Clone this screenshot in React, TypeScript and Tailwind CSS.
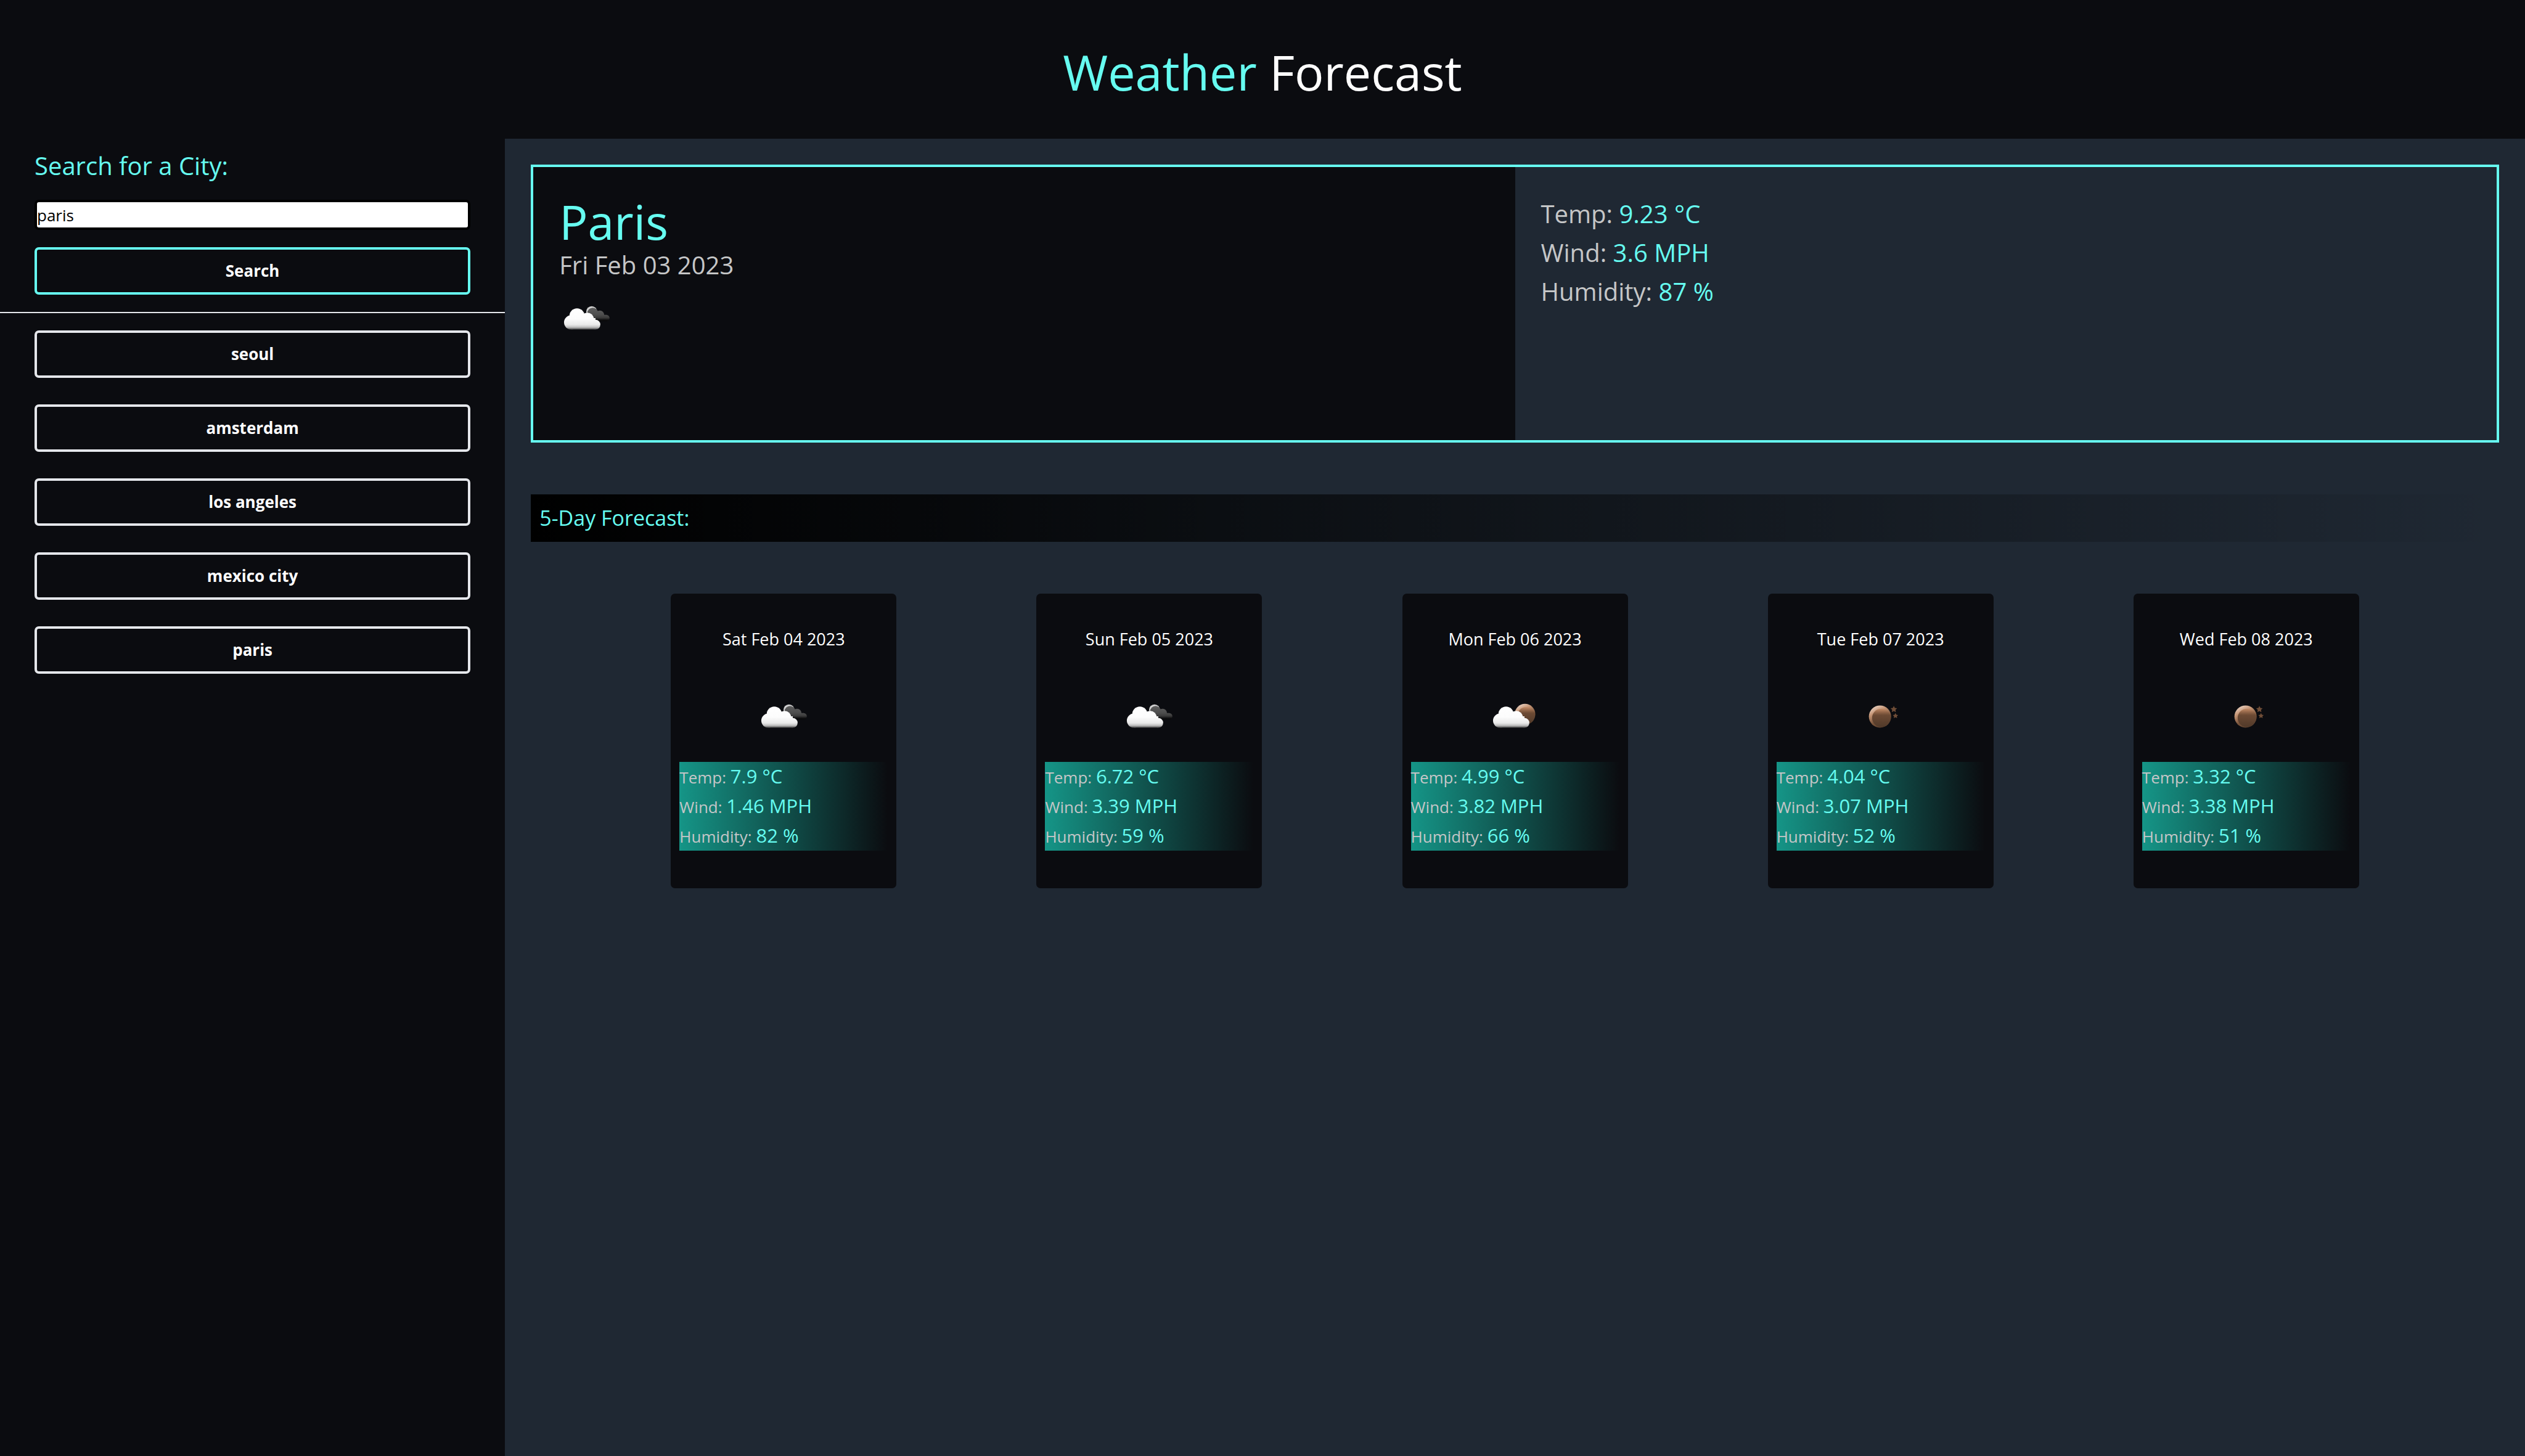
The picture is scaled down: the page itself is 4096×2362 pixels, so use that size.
const ACCENT = "text-[#66fcf1]";

type Sky = "clouds" | "moonCloud" | "moon";

function IconGradients() {
  return (
    <defs>
      <linearGradient id="front" gradientUnits="userSpaceOnUse" x1="0" y1="32" x2="0" y2="71">
        <stop offset="0" stopColor="#ffffff" />
        <stop offset="0.5" stopColor="#fcfcfc" />
        <stop offset="0.78" stopColor="#e9e9e9" />
        <stop offset="0.9" stopColor="#bdbdbd" />
        <stop offset="1" stopColor="#4a4a4b" />
      </linearGradient>
      <linearGradient id="back" gradientUnits="userSpaceOnUse" x1="0" y1="29" x2="0" y2="56">
        <stop offset="0" stopColor="#626262" />
        <stop offset="0.55" stopColor="#4d4d4d" />
        <stop offset="0.75" stopColor="#3c3c3c" />
        <stop offset="0.92" stopColor="#0c0c0d" />
        <stop offset="1" stopColor="#080809" />
      </linearGradient>
      <linearGradient id="rim" x1="0.2" y1="0" x2="0.7" y2="1">
        <stop offset="0" stopColor="#efd9cb" />
        <stop offset="0.3" stopColor="#c49474" />
        <stop offset="0.65" stopColor="#7a543a" />
        <stop offset="1" stopColor="#573d2c" />
      </linearGradient>
      <linearGradient id="disc" x1="0" y1="0" x2="0" y2="1">
        <stop offset="0" stopColor="#c58c67" />
        <stop offset="0.22" stopColor="#8a6044" />
        <stop offset="0.35" stopColor="#6c4a34" />
        <stop offset="1" stopColor="#513a2a" />
      </linearGradient>
    </defs>
  );
}

function FrontCloud() {
  return (
    <g fill="url(#front)">
      <circle cx="33" cy="46" r="14" />
      <circle cx="22" cy="58" r="13" />
      <circle cx="52" cy="52" r="12" />
      <circle cx="67" cy="62" r="9" />
      <rect x="22" y="50" width="45" height="21" />
    </g>
  );
}

function BackCloud() {
  return (
    <g>
      <circle cx="60" cy="38" r="10" fill="#d0d0d0" />
      <g fill="url(#back)">
        <circle cx="62" cy="41" r="10" />
        <circle cx="75" cy="44" r="8" />
        <circle cx="87" cy="50" r="6" />
        <rect x="60" y="44" width="27" height="12" />
      </g>
    </g>
  );
}

function WeatherIcon({ sky, label }: { sky: Sky; label: string }) {
  return (
    <svg viewBox="0 0 100 100" className="block size-22" role="img" aria-label={label}>
      <IconGradients />
      {sky === "clouds" && <BackCloud />}
      {sky === "moonCloud" && (
        <g>
          <circle cx="68" cy="46" r="19" fill="url(#rim)" />
          <circle cx="70" cy="49" r="16" fill="url(#disc)" />
        </g>
      )}
      {sky === "moon" && (
        <g>
          <circle cx="48.5" cy="50.5" r="20.5" fill="url(#rim)" />
          <circle cx="51" cy="53" r="17" fill="url(#disc)" />
          <path
            d="M74 31l1.900 3.700 4.100.600-3 2.900.700 4.100-3.700-1.900-3.700 1.900.700-4.100-3-2.900 4.100-.600z"
            fill="#6f4d37"
          />
          <path
            d="M77 44l1.600 3.100 3.400.500-2.500 2.400.600 3.400-3.100-1.600-3.100 1.600.600-3.400-2.500-2.400 3.400-.500z"
            fill="#6f4d37"
          />
        </g>
      )}
      {sky !== "moon" && <FrontCloud />}
    </svg>
  );
}

const history = ["seoul", "amsterdam", "los angeles", "mexico city", "paris"];

const days: { date: string; sky: Sky; label: string; temp: string; wind: string; humidity: string }[] = [
  { date: "Sat Feb 04 2023", sky: "clouds", label: "Overcast", temp: "7.9", wind: "1.46", humidity: "82" },
  { date: "Sun Feb 05 2023", sky: "clouds", label: "Overcast", temp: "6.72", wind: "3.39", humidity: "59" },
  { date: "Mon Feb 06 2023", sky: "moonCloud", label: "Partly cloudy", temp: "4.99", wind: "3.82", humidity: "66" },
  { date: "Tue Feb 07 2023", sky: "moon", label: "Clear", temp: "4.04", wind: "3.07", humidity: "52" },
  { date: "Wed Feb 08 2023", sky: "moon", label: "Clear", temp: "3.32", wind: "3.38", humidity: "51" },
];

function Stat({ name, value, valueClass }: { name: string; value: string; valueClass: string }) {
  return (
    <p>
      {name}: <span className={valueClass}>{value}</span>
    </p>
  );
}

export default function App() {
  return (
    <div className="flex min-h-screen flex-col bg-[#1f2833] font-['Open_Sans','Noto_Sans',sans-serif] text-[#c5c6c7]">
      <header className="bg-[#0b0c10] pt-[67px] pb-[58px] text-center text-white">
        <h1 className="text-[79px] leading-[100px]">
          <span className={ACCENT}>Weather</span> Forecast
        </h1>
      </header>

      <div className="flex flex-1">
        <aside className="w-1/5 bg-[#0b0c10] pt-[14px]">
          <form className="flex flex-col px-14" onSubmit={(e) => e.preventDefault()}>
            <label htmlFor="city" className={`text-[40px] leading-[60px] ${ACCENT}`}>
              Search for a City:
            </label>
            <input
              id="city"
              type="text"
              defaultValue="paris"
              className="mt-[25px] h-[49px] w-full rounded-[7px] border-4 border-black bg-white text-[26px] leading-[40px] text-black"
            />
            <button
              type="submit"
              className="mt-7 h-[77px] w-full rounded-[7px] border-4 border-[#66fcf1] text-[26px] font-bold text-white"
            >
              Search
            </button>
          </form>
          <hr className="mt-7 border-t-2 border-gray-200" />
          <div className="mt-7 flex flex-col gap-[43px] px-14">
            {history.map((city) => (
              <button
                key={city}
                type="button"
                className="h-[77px] w-full rounded-[7px] border-4 border-gray-200 text-[26px] font-bold text-white"
              >
                {city}
              </button>
            ))}
          </div>
        </aside>

        <main className="w-4/5 px-[42px] pt-[42px]">
          <section className="grid grid-cols-2 border-4 border-[#66fcf1]">
            <div className="bg-[#0b0c10] px-[42px] pt-[42px] pb-[154px]">
              <h2 className={`text-[77px] leading-[94px] ${ACCENT}`}>Paris</h2>
              <p className="text-[40px] leading-[46px]">Fri Feb 03 2023</p>
              <div className="mt-[19px]">
                <WeatherIcon sky="clouds" label="Overcast" />
              </div>
            </div>
            <div className="px-[42px] pt-11 text-[40px] leading-[63px]">
              <Stat name="Temp" value="9.23 °C" valueClass={ACCENT} />
              <Stat name="Wind" value="3.6 MPH" valueClass={ACCENT} />
              <Stat name="Humidity" value="87 %" valueClass={ACCENT} />
            </div>
          </section>

          <h3
            className={`mt-[84px] bg-linear-to-r from-black to-transparent px-[14px] text-[34px] leading-[77px] ${ACCENT}`}
          >
            5-Day Forecast:
          </h3>

          <section className="mt-[84px] flex justify-evenly">
            {days.map((day) => (
              <article
                key={day.date}
                className="flex w-[366px] flex-col items-center rounded-[7px] bg-[#0b0c10] px-[14px] pt-[54px] pb-[61px]"
              >
                <h4 className="text-[27px] leading-[40px] text-white">{day.date}</h4>
                <div className="mt-[61px]">
                  <WeatherIcon sky={day.sky} label={day.label} />
                </div>
                <div className="mt-[30px] w-full bg-linear-to-r from-[#159587] to-transparent text-[26px] leading-[46px]">
                  <Stat name="Temp" value={`${day.temp} °C`} valueClass="text-[31px] text-[#66fcf1]" />
                  <Stat name="Wind" value={`${day.wind} MPH`} valueClass="text-[31px] text-[#66fcf1]" />
                  <Stat name="Humidity" value={`${day.humidity} %`} valueClass="text-[31px] text-[#66fcf1]" />
                </div>
              </article>
            ))}
          </section>
        </main>
      </div>
    </div>
  );
}
